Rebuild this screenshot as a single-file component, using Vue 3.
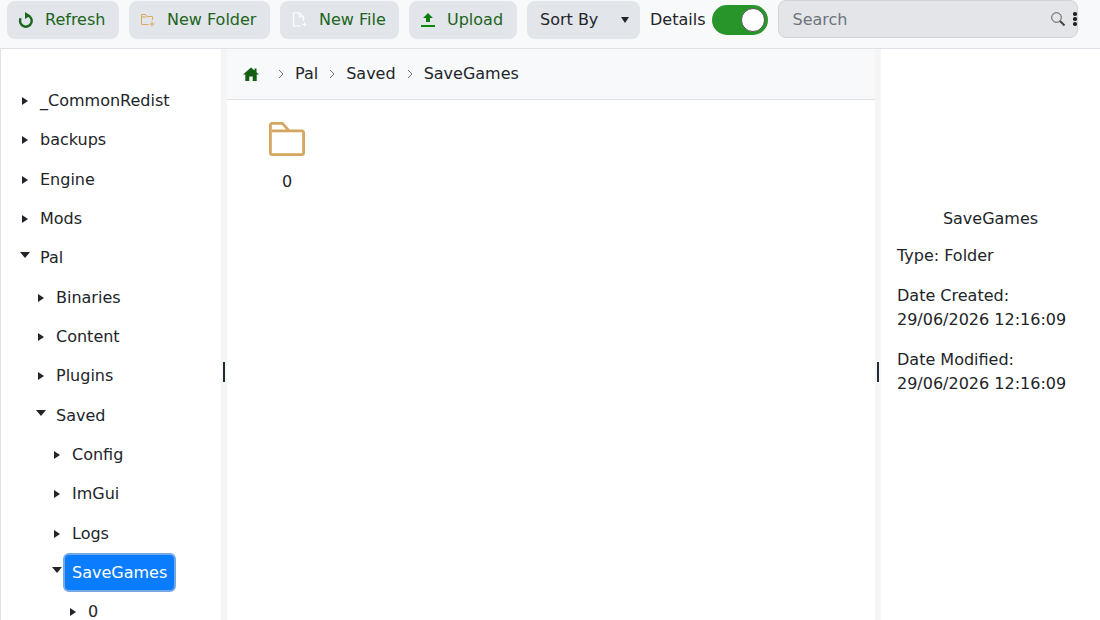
<script setup>
const tree = [
  { label: '_CommonRedist', depth: 0 },
  { label: 'backups', depth: 0 },
  { label: 'Engine', depth: 0 },
  { label: 'Mods', depth: 0 },
  { label: 'Pal', depth: 0, open: true },
  { label: 'Binaries', depth: 1 },
  { label: 'Content', depth: 1 },
  { label: 'Plugins', depth: 1 },
  { label: 'Saved', depth: 1, open: true },
  { label: 'Config', depth: 2 },
  { label: 'ImGui', depth: 2 },
  { label: 'Logs', depth: 2 },
  { label: 'SaveGames', depth: 2, open: true, selected: true },
  { label: '0', depth: 3 },
]
const crumbs = ['Pal', 'Saved', 'SaveGames']
</script>

<template>
  <div class="app">
    <header class="toolbar">
      <button class="btn refresh">
        <svg width="16" height="16" viewBox="0 0 16 16"><path d="M9.500 3.300a5.800 5.800 0 1 1-6.800 2.900" fill="none" stroke="#1b661b" stroke-width="2.400"/><path d="M7 0v7l5.500-3.500z" fill="#1b661b"/></svg>
        <span>Refresh</span>
      </button>
      <button class="btn newfolder">
        <svg width="16" height="16" viewBox="0 0 16 16" fill="none" stroke="#dca95f" stroke-width="1"><path d="M8.500 12.500H1.500V2.500h4l1.500 2h5.500V8"/><path d="M1.500 5h5"/><path d="M12 9.500v5M9.500 12h5"/></svg>
        <span>New Folder</span>
      </button>
      <button class="btn newfile">
        <svg width="16" height="16" viewBox="0 0 16 16" fill="none" stroke="#fff" stroke-width="1.200"><path d="M9 14H1.500V1h6l4 4v4"/><path d="M7.500 1v4h4"/><path d="M12.500 10.500v4M10.500 12.500h4"/></svg>
        <span>New File</span>
      </button>
      <button class="btn upload">
        <svg width="16" height="16" viewBox="0 0 16 16"><path d="M8 1 3 6H6v4h4V6h3z" fill="#0a7d0a"/><rect x="1" y="13" width="14" height="2" fill="#0a8a0a"/></svg>
        <span>Upload</span>
      </button>
      <button class="btn sort">
        <span>Sort By</span>
        <i class="caret-down"></i>
      </button>
      <span class="details-label">Details</span>
      <span class="toggle"><i class="knob"></i></span>
      <div class="search">
        <span class="placeholder">Search</span>
        <svg class="lens" width="16" height="16" viewBox="0 0 16 16" fill="none"><circle cx="6.500" cy="6.500" r="4.800" stroke="#555" stroke-width="1"/><path d="M10 10l4.500 4.500" stroke="#444" stroke-width="2"/></svg>
        <span class="dots"><i></i><i></i><i></i></span>
      </div>
    </header>

    <main class="body">
      <nav class="tree">
        <div
          v-for="item in tree"
          :key="item.label"
          class="row"
          :class="'depth' + item.depth"
        >
          <i :class="item.open ? 'tri-open' : 'tri-closed'"></i>
          <span class="label" :class="{ selected: item.selected }">{{ item.label }}</span>
        </div>
      </nav>

      <div class="splitter"><i></i></div>

      <section class="center">
        <div class="crumbs">
          <svg class="home" width="16" height="14" viewBox="0 0 16 14"><path d="M8 .5 0 7.500h2.300V14h4v-4.500h3.400V14h4V7.500H16L13.500 5.300V1.500h-2v2z" fill="#145f14"/></svg>
          <template v-for="c in crumbs" :key="c">
            <svg class="sep" width="6" height="10" viewBox="0 0 6 10"><path d="M1 1l4 4-4 4" fill="none" stroke="#6c757d" stroke-width="1"/></svg>
            <span class="crumb">{{ c }}</span>
          </template>
        </div>
        <div class="files">
          <div class="file">
            <svg width="36" height="34" viewBox="0 0 36 34" fill="none" stroke="#d4a662" stroke-width="2.800" stroke-linejoin="round"><path d="M3 1.400h10.500l6.500 7.500h13a1.600 1.600 0 0 1 1.600 1.600v20.500a1.600 1.600 0 0 1-1.600 1.600H3A1.600 1.600 0 0 1 1.400 31V3A1.600 1.600 0 0 1 3 1.400z"/><path d="M3 8.900h17"/></svg>
            <span class="file-name">0</span>
          </div>
        </div>
      </section>

      <div class="splitter"><i></i></div>

      <aside class="details">
        <div class="d-title">SaveGames</div>
        <p>Type: Folder</p>
        <p>Date Created:<br>29/06/2026 12:16:09</p>
        <p>Date Modified:<br>29/06/2026 12:16:09</p>
      </aside>
    </main>
  </div>
</template>

<style>
html, body { margin: 0; padding: 0; overflow: hidden; }
</style>

<style scoped>
.app {
  width: 1100px;
  height: 620px;
  overflow: hidden;
  background: #fff;
  color: #212529;
  font-family: "DejaVu Sans", sans-serif;
  font-size: 16px;
  line-height: 24px;
  display: flex;
  flex-direction: column;
}
.toolbar {
  height: 48px;
  flex: none;
  box-sizing: content-box;
  background: #f8f9fa;
  border-bottom: 1px solid #dee2e6;
  display: flex;
  align-items: flex-start;
  position: relative;
}
.btn {
  height: 38px;
  margin-top: 1px;
  border: 0;
  border-radius: 8px;
  background: #e2e5ea;
  color: #1c641c;
  font: inherit;
  display: flex;
  align-items: center;
  padding: 0;
}
.refresh { margin-left: 7px; width: 112px; padding-left: 11px; gap: 11px; }
.newfolder { margin-left: 10px; width: 141px; padding-left: 11px; gap: 11px; }
.newfile { margin-left: 10px; width: 119px; padding-left: 12px; gap: 11px; }
.upload { margin-left: 10px; width: 108px; padding-left: 11px; gap: 11px; }
.sort { margin-left: 10px; width: 113px; padding-left: 13px; color: #212529; justify-content: space-between; padding-right: 11px; }
.caret-down {
  width: 0; height: 0;
  border-left: 4px solid transparent;
  border-right: 4px solid transparent;
  border-top: 6px solid #212529;
}
.details-label { margin-left: 10px; margin-top: 8px; }
.toggle {
  margin-left: 7px;
  margin-top: 5px;
  width: 56px;
  height: 30px;
  border-radius: 15px;
  background: #28952a;
  box-sizing: border-box;
  padding: 3px 3px 3px 29px;
}
.knob {
  display: block;
  width: 24px;
  height: 24px;
  box-sizing: border-box;
  border-radius: 50%;
  background: #fff;
  border: 1px solid #555;
}
.search {
  margin-left: 10px;
  width: 300px;
  height: 38px;
  box-sizing: border-box;
  border: 1px solid #ced4da;
  border-radius: 8px;
  background: #e4e5e8;
  display: flex;
  align-items: center;
  padding-left: 14px;
  position: relative;
}
.placeholder { color: #6c757d; flex: 1; margin-top: 2px; margin-left: -1px; }
.lens { margin-right: 7px; }
.dots { display: flex; flex-direction: column; gap: 1.500px; width: 3px; margin-right: 1px; }
.dots i { width: 3.500px; height: 3.500px; border-radius: 50%; background: #222; display: block; }

.body { flex: 1; display: flex; min-height: 0; }
.tree {
  width: 220px;
  flex: none;
  box-sizing: content-box;
  border-left: 1px solid #dee2e6;
  padding-top: 32.400px;
  background: #fff;
  overflow: hidden;
}
.row {
  height: 39.33px;
  display: flex;
  align-items: center;
  position: relative;
}
.depth0 { padding-left: 21px; }
.depth1 { padding-left: 37px; }
.depth2 { padding-left: 53px; }
.depth3 { padding-left: 69px; }
.tri-closed {
  width: 0; height: 0;
  border-top: 4px solid transparent;
  border-bottom: 4px solid transparent;
  border-left: 6px solid #212529;
  margin-right: 12px;
}
.tri-open {
  width: 0; height: 0;
  border-left: 5px solid transparent;
  border-right: 5px solid transparent;
  border-top: 6px solid #212529;
  margin-left: -2px;
  margin-right: 10px;
  margin-top: -6px;
}
.label { white-space: nowrap; }
.label.selected {
  background: #0a7dff;
  color: #fff;
  border: 2px solid #74a9e6;
  border-radius: 6px;
  padding: 5.500px 7px;
  margin-left: -9px;
  line-height: 24px;
}
.splitter {
  width: 6px;
  flex: none;
  background: #f5f5f5;
  box-sizing: border-box;
  padding-top: 313px;
  display: flex;
  justify-content: center;
}
.splitter i {
  display: block;
  width: 2px;
  height: 20px;
  background: #212b36;
}
.center { flex: 1; min-width: 0; display: flex; flex-direction: column; }
.crumbs {
  height: 50px;
  flex: none;
  background: #f8f9fa;
  border-bottom: 1px solid #dee2e6;
  display: flex;
  align-items: center;
  padding-left: 16px;
}
.home { margin-right: 19px; }
.sep { margin-right: 11px; }
.crumb { margin-right: 11px; }
.files { padding: 22px 0 0 25px; }
.file { width: 70px; display: flex; flex-direction: column; align-items: center; }
.file-name { margin-top: 14px; }
.details {
  width: 219px;
  flex: none;
  box-sizing: border-box;
  padding: 158px 16px 0;
  background: #fff;
}
.d-title { text-align: center; margin-bottom: 13px; }
.details p { margin: 0 0 16px; }
</style>
